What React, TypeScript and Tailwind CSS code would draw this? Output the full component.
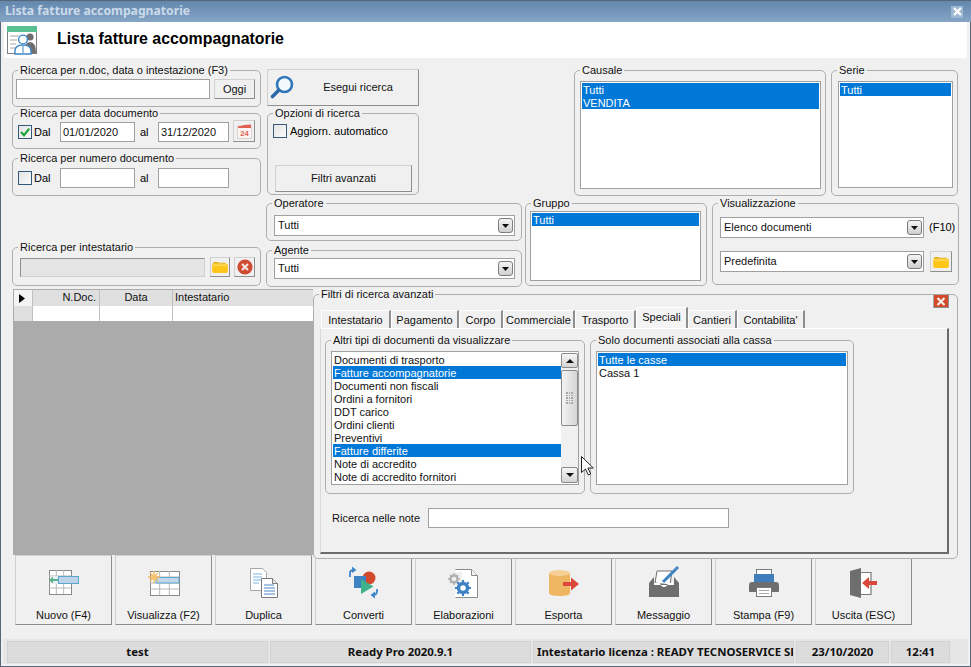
import type { ReactNode } from 'react';

function Group({ label, className = '', children }: { label: string; className?: string; children?: ReactNode }) {
  return (
    <fieldset className={`min-w-0 shrink-0 rounded-[5px] border border-[#aeaeae] ${className}`}>
      <legend className="ml-[5px] px-[2px] text-[11px] leading-[14px] text-[#111]">{label}</legend>
      {children}
    </fieldset>
  );
}

function TextBox({ value = '', className = '' }: { value?: string; className?: string }) {
  return (
    <input
      readOnly
      value={value}
      className={`h-[20px] shrink-0 border border-[#a0a0a0] bg-white px-[2px] text-[11px] text-[#111] outline-none ${className}`}
    />
  );
}

function Bevel({ className = '', children }: { className?: string; children?: ReactNode }) {
  return (
    <div className={`flex shrink-0 items-center justify-center border border-[#d0d0d0] border-r-[#8e8e8e] border-b-[#8e8e8e] text-[11px] text-[#111] ${className}`}>
      {children}
    </div>
  );
}

function Check({ checked = false }: { checked?: boolean }) {
  return (
    <span className="flex h-[14px] w-[14px] shrink-0 items-center justify-center border border-[#33587a] bg-gradient-to-br from-[#e4e4e4] to-[#fafafa]">
      {checked && (
        <svg width="12" height="12" viewBox="0 0 12 12">
          <path d="M2 6l3 3.2L10.2 2.6" fill="none" stroke="#1fa33a" strokeWidth="2.2" />
        </svg>
      )}
    </span>
  );
}

function Combo({ value, className = '' }: { value: string; className?: string }) {
  return (
    <div className={`flex h-[21px] shrink-0 items-center justify-between border border-[#a0a0a0] bg-white pl-[3px] pr-[1px] text-[11px] text-[#111] ${className}`}>
      <span>{value}</span>
      <span className="flex h-[15px] w-[15px] items-center justify-center rounded-[3px] border border-[#7c7c7c] bg-gradient-to-b from-[#f4f4f4] to-[#cfcfcf]">
        <svg width="7" height="4" viewBox="0 0 7 4">
          <path d="M0 0h7L3.5 4z" fill="#111" />
        </svg>
      </span>
    </div>
  );
}

function ListBox({ rows, selected, className = '', rowClass = '' }: { rows: string[]; selected: string[]; className?: string; rowClass?: string }) {
  return (
    <div className={`shrink-0 border border-[#a0a0a0] bg-white p-[1px] text-[11px] leading-[14px] ${className}`}>
      {rows.map((row) => (
        <div
          key={row}
          className={`h-[13px] whitespace-nowrap pl-[1px] ${rowClass} ${selected.includes(row) ? 'bg-[#0078d7] text-white' : 'text-[#111]'}`}
        >
          {row}
        </div>
      ))}
    </div>
  );
}

function FolderIcon() {
  return (
    <svg width="16" height="12" viewBox="0 0 17 13">
      <path d="M1 3V2q0-1 1-1h4l1 1h7q1 0 1 1z" fill="#e3a90b" />
      <path d="M0 4q0-1 1-1h15q1 0 1 1v7q0 2-2 2H2q-2 0-2-2z" fill="#ffc61a" />
      <path d="M1 4h15v1H1z" fill="#ffe58a" />
    </svg>
  );
}

function RedX({ size = 16 }: { size?: number }) {
  return (
    <svg width={size} height={size} viewBox="0 0 16 16">
      <circle cx="8" cy="8" r="7.6" fill="#cf4a32" />
      <path d="M5 5l6 6M11 5l-6 6" stroke="#f3e4df" strokeWidth="2.2" />
    </svg>
  );
}

function HeaderIcon() {
  return (
    <svg width="31" height="29" viewBox="0 0 31 29">
      <rect x="0.5" y="0.5" width="29" height="27" fill="#fff" stroke="#7d7d7d" />
      <rect x="0" y="0" width="30" height="6" fill="#58bf92" />
      <path d="M3 10h9M3 14h7M3 18h6M3 22h5" stroke="#a8a8a8" />
      <circle cx="23" cy="11" r="3.6" fill="#6e6e6e" />
      <path d="M17 27q0-11 6-11t6 11z" fill="#6e6e6e" />
      <circle cx="16" cy="13.5" r="4.4" fill="#fff" stroke="#3d87c6" strokeWidth="1.4" />
      <path d="M8 28v-3q0-6 8-6t8 6v3z" fill="#fff" stroke="#3d87c6" strokeWidth="1.4" />
      <path d="M16 20v7" stroke="#3d87c6" />
    </svg>
  );
}

function LensIcon() {
  return (
    <svg width="24" height="24" viewBox="0 0 24 24">
      <circle cx="14.5" cy="9.5" r="7.5" fill="#f2f7fb" stroke="#2f76b8" strokeWidth="2.6" />
      <path d="M8.5 15.5L2.5 21.5" stroke="#2a6aa8" strokeWidth="3.6" strokeLinecap="round" />
    </svg>
  );
}

function CalendarIcon() {
  return (
    <svg width="15" height="15" viewBox="0 0 15 15">
      <rect x="0.5" y="2" width="14" height="12.5" fill="#fbf4f2" stroke="#d9d4d2" />
      <path d="M1 2.5q6-2 13-2v3.5H1z" fill="#e2604f" />
      <text x="7.5" y="12" textAnchor="middle" fontSize="7.5" fontWeight="700" fill="#e2604f" fontFamily="Liberation Sans, sans-serif">
        24
      </text>
    </svg>
  );
}

function ToolIcon({ name }: { name: string }) {
  const grid = (x: number, y: number, w: number, h: number) => (
    <>
      <rect x={x + 0.5} y={y + 0.5} width={w} height={h} fill="#fff" stroke="#8a8a8a" />
      <path d={`M${x + w / 3} ${y}v${h}M${x + (2 * w) / 3} ${y}v${h}M${x} ${y + h * 0.25}h${w}M${x} ${y + h * 0.5}h${w}M${x} ${y + h * 0.75}h${w}`} stroke="#b8b8b8" />
    </>
  );
  return (
    <svg width="40" height="36" viewBox="0 0 40 36">
      {name === 'nuovo' && (
        <>
          {grid(5, 6, 22, 24)}
          <rect x="14.5" y="12.5" width="20" height="7" fill="#bcd3ea" stroke="#5ba7c9" />
          <rect x="8" y="12" width="6" height="8" fill="#e6f0f4" />
          <path d="M5 16l4-3.5V15h5v2H9v2.500z" fill="#5fb18d" />
        </>
      )}
      {name === 'visualizza' && (
        <>
          {grid(6, 7, 29, 24)}
          <rect x="12" y="13.500" width="23" height="5.500" fill="#c2d6ec" stroke="#5ba7c9" />
          <g stroke="#f2b95c" strokeWidth="1.4">
            <path d="M10 7v12M4 13h12M6 9l8 8M14 9l-8 8" />
          </g>
          <circle cx="10" cy="13" r="2.600" fill="#f7c46c" />
        </>
      )}
      {name === 'duplica' && (
        <>
          <path d="M6.500 4.500h12l4 4v18h-16z" fill="#fff" stroke="#a8a8a8" />
          <path d="M9 10h9M9 13h9M9 16h9M9 19h6" stroke="#7fb5e2" />
          <path d="M17.500 14.500h11l5 5v14h-16z" fill="#fff" stroke="#7a7a7a" />
          <path d="M28.500 14.500v5h5" fill="#e8e8e8" stroke="#7a7a7a" />
          <path d="M20 21h10M20 24h11M20 27h11M20 30h11" stroke="#4c86c6" />
        </>
      )}
      {name === 'converti' && (
        <>
          <path d="M6 13V9q0-3 4-3" fill="none" stroke="#3f86c9" strokeWidth="1.800" />
          <path d="M8 2.500l4.500 3.500L8 9z" fill="#3f86c9" />
          <circle cx="25" cy="14" r="6.500" fill="#d2492c" />
          <rect x="10" y="12" width="12" height="12" fill="#3d82c4" />
          <path d="M17 15l12.500 7.500L17 30z" fill="#3fb28c" />
          <path d="M33 25v2q0 4-4 4" fill="none" stroke="#3f86c9" strokeWidth="1.800" />
          <path d="M31 27.500l-4.500 3.500 4.500 3.500z" fill="#3f86c9" />
        </>
      )}
      {name === 'elaborazioni' && (
        <>
          <path d="M11.500 5.500h16l6 6v22h-22" fill="#fff" stroke="#8a8a8a" />
          <path d="M27.500 5.500v6h6" fill="#f4f4f4" stroke="#8a8a8a" />
          <rect x="2" y="8" width="16" height="14" fill="#f0f0f0" />
          <circle cx="10" cy="15" r="3.500" fill="none" stroke="#b0b0b0" strokeWidth="2.500" />
          <path d="M10 9v12M4 15h12M6 11l8 8M14 11l-8 8" stroke="#b0b0b0" strokeWidth="1.500" strokeDasharray="2 8" />
          <circle cx="19" cy="24" r="4.500" fill="none" stroke="#3d82c4" strokeWidth="3.500" />
          <path d="M19 16v16M11 24h16M13.300 18.300l11.400 11.400M24.700 18.300L13.300 29.700" stroke="#3d82c4" strokeWidth="2.200" strokeDasharray="2.500 11" />
        </>
      )}
      {name === 'esporta' && (
        <>
          <path d="M5 9v20q0 3 10.500 3T26 29V9z" fill="#efb662" />
          <ellipse cx="15.500" cy="9" rx="10.500" ry="3" fill="#f5cf94" />
          <path d="M19 18h8v-4.500l8 6.500-8 6.500V22h-8z" fill="#d9483a" />
        </>
      )}
      {name === 'messaggio' && (
        <>
          <path d="M11 19L13 7h15l-2 14z" fill="#fff" stroke="#6e6e6e" />
          <path d="M5 19l5-6v7h20v-7l5 6v14H5z" fill="#6e6e6e" />
          <path d="M10 19h6q1 4 4 4t4-4h6v2H10z" fill="#fff" />
          <path d="M19 18l13-13" stroke="#3d82c4" strokeWidth="3" />
          <path d="M32 5l2-2" stroke="#3d82c4" strokeWidth="3" />
        </>
      )}
      {name === 'stampa' && (
        <>
          <rect x="12.500" y="5.500" width="15" height="6" fill="#fff" stroke="#7a7a7a" />
          <path d="M5 21q0-3 3-3h24q3 0 3 3v6q0 1-1 1H6q-1 0-1-1z" fill="#6e6e6e" />
          <path d="M10 10h20v8H10z" fill="#3f7ebc" />
          <rect x="12.500" y="23.500" width="15" height="9" fill="#fff" stroke="#7a7a7a" />
          <path d="M15 26.500h10M15 29.500h10" stroke="#a8a8a8" />
        </>
      )}
      {name === 'uscita' && (
        <>
          <path d="M17 8.500h10v22H17" fill="#fff" stroke="#7a7a7a" strokeWidth="1.200" />
          <path d="M6 7l11-3v30L6 31z" fill="#6e6e6e" />
          <path d="M33 17h-8v-4l-7 6 7 6v-4h8z" fill="#d9483a" />
        </>
      )}
    </svg>
  );
}

const TOOLS = [
  { id: 'nuovo', label: 'Nuovo (F4)' },
  { id: 'visualizza', label: 'Visualizza (F2)' },
  { id: 'duplica', label: 'Duplica' },
  { id: 'converti', label: 'Converti' },
  { id: 'elaborazioni', label: 'Elaborazioni' },
  { id: 'esporta', label: 'Esporta' },
  { id: 'messaggio', label: 'Messaggio' },
  { id: 'stampa', label: 'Stampa (F9)' },
  { id: 'uscita', label: 'Uscita (ESC)' },
];

const TABS = [
  { label: 'Intestatario', w: 'w-[70px]' },
  { label: 'Pagamento', w: 'w-[68px]' },
  { label: 'Corpo', w: 'w-[44px]' },
  { label: 'Commerciale', w: 'w-[72px]' },
  { label: 'Trasporto', w: 'w-[61px]' },
  { label: 'Speciali', w: 'w-[52px]', active: true },
  { label: 'Cantieri', w: 'w-[49px]' },
  { label: "Contabilita'", w: 'w-[68px]' },
];

const DOC_TYPES = [
  'Documenti di trasporto',
  'Fatture accompagnatorie',
  'Documenti non fiscali',
  'Ordini a fornitori',
  'DDT carico',
  'Ordini clienti',
  'Preventivi',
  'Fatture differite',
  'Note di accredito',
  'Note di accredito fornitori',
];

const STATUS = [
  { text: 'test', w: 'w-[261px]' },
  { text: 'Ready Pro 2020.9.1', w: 'w-[261px]' },
  { text: 'Intestatario licenza : READY TECNOSERVICE SRL', w: 'w-[261px]', clip: true },
  { text: '23/10/2020', w: 'w-[93px]' },
  { text: '12:41', w: 'w-[59px]' },
];

export default function App() {
  return (
    <div className="relative flex h-[667px] w-[971px] flex-col overflow-hidden bg-[#f0f0f0] font-['Liberation_Sans',sans-serif] shadow-[inset_0_0_0_1px_#56677c]">
      {/* title bar */}
      <div className="flex h-[22px] shrink-0 items-center justify-between border-t border-[#56677c] bg-gradient-to-b from-[#6386ad] to-[#86a6c7] pl-[5px] pr-[8px]">
        <span className="font-['Noto_Sans',sans-serif] text-[12.2px] font-bold text-[#cbdaea]">Lista fatture accompagnatorie</span>
        <span className="flex h-[12px] w-[12px] items-center justify-center bg-[#9db8d4]">
          <svg width="9" height="9" viewBox="0 0 9 9">
            <path d="M1 1l7 7M8 1L1 8" stroke="#fff" strokeWidth="2.200" />
          </svg>
        </span>
      </div>

      {/* header */}
      <div className="mx-[4px] flex h-[36px] shrink-0 items-center bg-white pl-[3px]">
        <HeaderIcon />
        <span className="ml-[19px] pb-[2px] text-[15.9px] font-bold text-black">Lista fatture accompagnatorie</span>
      </div>

      {/* filters */}
      <div className="mt-[5px] flex shrink-0 pl-[12px]">
        <div className="flex w-[249px] flex-col">
          <Group label="Ricerca per n.doc, data o intestazione (F3)" className="h-[44px]">
            <div className="flex pl-[3px] pt-[2px]">
              <TextBox className="w-[194px]" />
              <Bevel className="ml-[4px] h-[20px] w-[41px]">Oggi</Bevel>
            </div>
          </Group>
          <Group label="Ricerca per data documento" className="-mt-px h-[43px]">
            <div className="flex items-center pl-[5px] pt-[2px]">
              <Check checked />
              <span className="ml-[2px] w-[26px] text-[11px]">Dal</span>
              <TextBox value="01/01/2020" className="w-[75px]" />
              <span className="w-[23px] pl-[5px] text-[11px]">al</span>
              <TextBox value="31/12/2020" className="w-[71px]" />
              <Bevel className="ml-[4px] -mt-[2px] h-[22px] w-[22px]">
                <CalendarIcon />
              </Bevel>
            </div>
          </Group>
          <Group label="Ricerca per numero documento" className="mt-[2px] h-[45px]">
            <div className="flex items-center pl-[5px] pt-[3px]">
              <Check />
              <span className="ml-[2px] w-[26px] text-[11px]">Dal</span>
              <TextBox className="w-[75px]" />
              <span className="w-[23px] pl-[5px] text-[11px]">al</span>
              <TextBox className="w-[71px]" />
            </div>
          </Group>
          <Group label="Ricerca per intestatario" className="mt-[44px] h-[46px]">
            <div className="flex items-center pl-[7px] pt-[3px]">
              <div className="h-[19px] w-[185px] border border-[#d0d0d0] border-l-[#909090] border-t-[#909090] bg-[#e4e4e4]" />
              <Bevel className="ml-[5px] h-[20px] w-[20px]">
                <FolderIcon />
              </Bevel>
              <Bevel className="ml-[4px] h-[20px] w-[21px]">
                <RedX />
              </Bevel>
            </div>
          </Group>
        </div>

        <div className="ml-[5px] flex flex-col">
          <div className="flex">
            <div className="ml-px flex w-[152px] flex-col">
              <Bevel className="relative mt-[6px] h-[37px] pl-[30px]">
                <span className="absolute left-[2px] top-[5px]">
                  <LensIcon />
                </span>
                Esegui ricerca
              </Bevel>
              <Group label="Opzioni di ricerca" className="h-[89px]">
                <div className="flex items-center pl-[5px] pt-[3px]">
                  <Check />
                  <span className="ml-[3px] text-[11px]">Aggiorn. automatico</span>
                </div>
                <Bevel className="ml-[7px] mt-[25px] h-[27px] w-[137px]">Filtri avanzati</Bevel>
              </Group>
            </div>
            <Group label="Causale" className="ml-[155px] h-[133px] w-[252px]">
              <div className="pl-[5px] pt-[4px]">
                <ListBox rows={['Tutti', 'VENDITA']} selected={['Tutti', 'VENDITA']} className="h-[108px] w-[241px]" />
              </div>
            </Group>
            <Group label="Serie" className="ml-[5px] h-[133px] w-[127px]">
              <div className="pl-[6px] pt-[4px]">
                <ListBox rows={['Tutti']} selected={['Tutti']} className="h-[107px] w-[115px]" />
              </div>
            </Group>
          </div>

          <div className="flex">
            <div className="flex w-[256px] flex-col">
              <Group label="Operatore" className="h-[45px]">
                <div className="pl-[7px] pt-[5px]">
                  <Combo value="Tutti" className="w-[241px]" />
                </div>
              </Group>
              <Group label="Agente" className="mt-[2px] h-[44px]">
                <div className="pl-[7px] pt-[1px]">
                  <Combo value="Tutti" className="w-[241px]" />
                </div>
              </Group>
            </div>
            <Group label="Gruppo" className="ml-[3px] h-[90px] w-[182px]">
              <div className="pl-[4px] pt-[1px]">
                <ListBox rows={['Tutti']} selected={['Tutti']} className="h-[70px] w-[171px]" />
              </div>
            </Group>
            <Group label="Visualizzazione" className="ml-[5px] h-[89px] w-[247px]">
              <div className="pl-[7px] pt-[7px]">
                <div className="flex items-center">
                  <Combo value="Elenco documenti" className="w-[204px]" />
                  <span className="ml-[5px] text-[11px]">(F10)</span>
                </div>
                <div className="mt-[13px] flex items-center">
                  <Combo value="Predefinita" className="w-[204px]" />
                  <Bevel className="ml-[6px] h-[21px] w-[22px]">
                    <FolderIcon />
                  </Bevel>
                </div>
              </div>
            </Group>
          </div>
        </div>
      </div>

      {/* list + advanced filters */}
      <div className="mt-[2px] flex h-[266px] shrink-0 pl-[13px]">
        <div className="w-[300px] bg-[#ababab] pl-px pt-px">
          <div className="grid grid-cols-[18px_66px_72px_1fr] gap-x-px bg-[#c0c0c0] text-[11px] leading-[15px] text-[#111]">
            <div className="flex h-[16px] items-center justify-center bg-[#f4f4f4] pr-[3px]">
              <svg width="6" height="9" viewBox="0 0 6 9">
                <path d="M0 0l6 4.500L0 9z" fill="#000" />
              </svg>
            </div>
            <div className="h-[16px] bg-[#e0e0e0] pr-[3px] text-right">N.Doc.</div>
            <div className="h-[16px] bg-[#e0e0e0] text-center">Data</div>
            <div className="h-[16px] bg-[#e0e0e0] pl-[2px]">Intestatario</div>
            <div className="h-[15px] bg-[#e0e0e0]" />
            <div className="h-[15px] bg-white" />
            <div className="h-[15px] bg-white" />
            <div className="h-[15px] bg-white" />
          </div>
        </div>

        <fieldset className="relative z-10 -mt-[2px] h-[272px] w-[645px] shrink-0 rounded-[5px] border border-[#aeaeae] bg-[#f0f0f0]">
          <legend className="ml-[5px] px-[2px] text-[11px] leading-[14px] text-[#111]">Filtri di ricerca avanzati</legend>
          <span className="absolute -top-[7px] right-[8px] flex h-[14px] w-[16px] items-center justify-center border border-[#a8a8a8] border-r-[#8e8e8e] border-b-[#8e8e8e] bg-[#d2492c]">
            <svg width="10" height="9" viewBox="0 0 10 9">
              <path d="M1.500 1l7 7M8.500 1l-7 7" stroke="#f6ebe7" strokeWidth="2.200" />
            </svg>
          </span>
          <div className="flex h-[27px] items-end pl-[7px]">
            {TABS.map((tab) => (
              <div
                key={tab.label}
                className={`flex shrink-0 items-center justify-center rounded-tl-[3px] border-t border-l border-r-2 border-white border-r-[#8e8e8e] text-[11px] text-[#111] ${tab.w} ${tab.active ? 'h-[21px] bg-[#f4f4f4] pb-[2px]' : 'h-[18px] bg-[#f0f0f0] pt-[1px]'}`}
              >
                {tab.label}
              </div>
            ))}
          </div>
          <div className="ml-[6px] h-[226px] w-[629px] border-t border-l border-r-2 border-b-2 border-white border-r-[#6b6b6b] border-b-[#6b6b6b] border-l-[#d8d8d8] pl-[4px] pt-[4px]">
            <div className="flex">
              <Group label="Altri tipi di documenti da visualizzare" className="h-[161px] w-[260px]">
                <div className="pl-[5px] pt-[4px]">
                  <div className="relative h-[134px] w-[248px]">
                    <ListBox rows={DOC_TYPES} selected={['Fatture accompagnatorie', 'Fatture differite']} className="h-[134px] w-[248px]" rowClass="w-[228px]" />
                    <div className="absolute bottom-[2px] right-[1px] top-[2px] flex w-[17px] flex-col bg-[#f0f0f0]">
                      <div className="flex h-[15px] items-center justify-center rounded-[2px] border border-[#8a8a8a] bg-gradient-to-b from-[#f6f6f6] to-[#d4d4d4]">
                        <svg width="8" height="4" viewBox="0 0 8 4">
                          <path d="M4 0l4 4H0z" fill="#111" />
                        </svg>
                      </div>
                      <div className="mt-[2px] flex h-[56px] items-center justify-center rounded-[2px] border border-[#8a8a8a] bg-gradient-to-r from-[#f2f2f2] to-[#d6d6d6]">
                        <div className="grid grid-cols-3 gap-[1px]">
                          {Array.from({ length: 15 }, (_, i) => (
                            <span key={i} className="h-[1.500px] w-[1.500px] bg-[#a8a8a8]" />
                          ))}
                        </div>
                      </div>
                      <div className="flex-1" />
                      <div className="flex h-[16px] items-center justify-center rounded-[2px] border border-[#8a8a8a] bg-gradient-to-b from-[#f6f6f6] to-[#d4d4d4]">
                        <svg width="8" height="4" viewBox="0 0 8 4">
                          <path d="M0 0h8L4 4z" fill="#111" />
                        </svg>
                      </div>
                    </div>
                  </div>
                </div>
              </Group>
              <Group label="Solo documenti associati alla cassa" className="ml-[5px] h-[161px] w-[264px]">
                <div className="pl-[5px] pt-[4px]">
                  <ListBox rows={['Tutte le casse', 'Cassa 1']} selected={['Tutte le casse']} className="h-[134px] w-[252px]" />
                </div>
              </Group>
            </div>
            <div className="ml-[7px] mt-[14px] flex items-center">
              <span className="w-[96px] text-[11px] text-[#111]">Ricerca nelle note</span>
              <TextBox className="w-[301px]" />
            </div>
          </div>
        </fieldset>
      </div>

      {/* toolbar */}
      <div className="flex h-[70px] shrink-0 gap-[3px] pl-[15px]">
        {TOOLS.map((tool) => (
          <Bevel key={tool.id} className="h-[70px] w-[97px] flex-col justify-start pt-[8px]">
            <ToolIcon name={tool.id} />
            <span className="mt-[8px] leading-[14px]">{tool.label}</span>
          </Bevel>
        ))}
      </div>

      {/* status bar */}
      <div className="mx-[3px] mt-[14px] flex h-[25px] shrink-0 items-start gap-[2px] bg-[#e6e6e6] pl-[4px] pt-[2px]">
        {STATUS.map((item) => (
          <div
            key={item.text}
            className={`flex h-[22px] shrink-0 items-center overflow-hidden whitespace-nowrap border border-[#d2d2d2] bg-[#dcdcdc] font-['Noto_Sans',sans-serif] text-[11.4px] font-bold text-[#111] ${item.w} ${item.clip ? 'justify-start pl-[3px]' : 'justify-center'}`}
          >
            {item.text}
          </div>
        ))}
      </div>

      {/* mouse pointer */}
      <svg className="absolute left-[581px] top-[456px] z-20" width="13" height="20" viewBox="0 0 13 20">
        <path d="M0.500 0.500v16l4-3.500 2.800 6 2.400-1-2.800-6h5.400z" fill="#fff" stroke="#222" />
      </svg>
    </div>
  );
}
